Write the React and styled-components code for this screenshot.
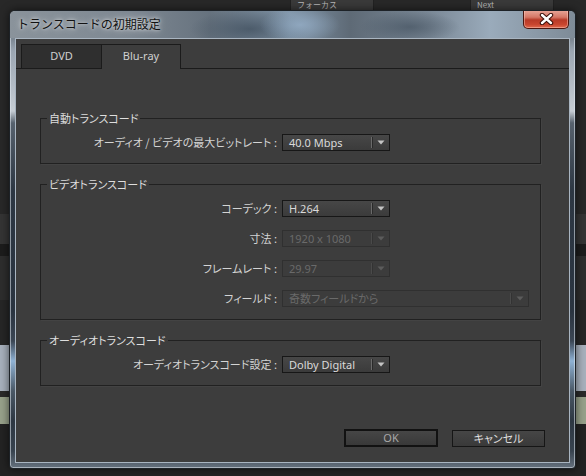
import styled, { createGlobalStyle } from 'styled-components'

const GlobalStyle = createGlobalStyle`
  html, body {
    margin: 0;
    padding: 0;
    background: #252525;
  }
  body {
    width: 586px;
    height: 476px;
    overflow: hidden;
    font-family: "Noto Sans", "Noto Sans CJK JP", sans-serif;
  }
`

const jp = `"Noto Sans CJK JP", "Noto Sans", sans-serif`

const Desktop = styled.div`
  position: relative;
  width: 586px;
  height: 476px;
  overflow: hidden;
  background: linear-gradient(to bottom,
    #282828 0, #282828 214px,
    #343434 214px, #343434 244px,
    #1c1c1c 244px, #1c1c1c 256px,
    #2d2d2d 256px, #2d2d2d 300px,
    #262626 300px, #262626 345px,
    #a7b0bc 345px, #a7b0bc 391px,
    #2a2a2a 391px, #2a2a2a 397px,
    #97a18a 397px, #97a18a 424px,
    #232323 424px);
`

const BackTab = styled.div`
  position: absolute;
  top: 0;
  left: ${p => p.$left}px;
  width: ${p => p.$width}px;
  height: 11px;
  background: #3a3a3a;
  border: 1px solid #222;
  border-top: none;
  box-sizing: border-box;
  padding-left: 6px;
  font: 8px ${jp};
  line-height: 9px;
  color: #b8b8b8;
`

const Window = styled.div`
  position: absolute;
  left: 9px;
  top: 10px;
  width: 567px;
  height: 459px;
  box-sizing: border-box;
  border: 1px solid #1d2227;
  border-radius: 6px 6px 4px 4px;
  box-shadow: inset 0 0 0 1px rgba(225, 233, 240, 0.55), 0 0 8px rgba(0, 0, 0, 0.6);
  background: linear-gradient(to bottom,
    #8f98a2 0, #7c8792 28px, #9ba6b2 40px, #c6cdd4 100px,
    #56616d 112px, #2d3743 180px, #2a3440 300px, #3b4654 330px,
    #8fb2d4 350px, #4a5866 380px, #2d3742 410px, #38434f 440px, #6b7784 459px);
  display: flex;
  flex-direction: column;
  overflow: hidden;
`

const TitleBar = styled.div`
  height: 27px;
  flex: none;
  display: flex;
  align-items: flex-start;
  justify-content: space-between;
  padding: 0 6px 0 7px;
  background:
    radial-gradient(ellipse 40px 18px at 290px 14px, rgba(150, 175, 200, 0.8), transparent),
    radial-gradient(ellipse 60px 20px at 240px 18px, rgba(60, 75, 90, 0.7), transparent),
    radial-gradient(ellipse 50px 16px at 400px 16px, rgba(70, 84, 98, 0.7), transparent),
    linear-gradient(to right, #8a939b 0, #7e8892 120px, #66727e 200px, #7f93a6 280px, #5e6a76 340px, #7a8896 420px, #9aabbb 480px, #7d8a96 567px);
`

const Title = styled.div`
  margin-top: 5px;
  font: 12px ${jp};
  line-height: 16px;
  color: #121212;
  text-shadow: 0 0 6px rgba(255, 255, 255, 0.85), 0 0 3px rgba(255, 255, 255, 0.6);
`

const CloseButton = styled.div`
  margin-top: -1px;
  width: 46px;
  height: 19px;
  box-sizing: border-box;
  border: 1px solid #4a1610;
  border-top: none;
  border-radius: 0 0 5px 5px;
  background: linear-gradient(to bottom, #e9a89b 0, #d57766 40%, #b83a28 55%, #c8452f 80%, #e06a4e 100%);
  box-shadow: inset 0 0 0 1px rgba(255, 210, 200, 0.45);
  display: flex;
  align-items: center;
  justify-content: center;
`

const Client = styled.div`
  flex: 1;
  margin: 0 5px 5px;
  border: 1px solid #a9b5c1;
  background: #3d3d3d;
  display: flex;
  flex-direction: column;
`

const TabStrip = styled.div`
  margin-top: 5px;
  padding-left: 5px;
  height: 24px;
  display: flex;
  align-items: flex-end;
  border-bottom: 1px solid #1b1b1b;
`

const Tab = styled.div`
  width: ${p => p.$width}px;
  height: ${p => (p.$active ? 25 : 24)}px;
  margin-bottom: ${p => (p.$active ? -1 : 0)}px;
  box-sizing: border-box;
  border: 1px solid #1b1b1b;
  border-bottom: none;
  border-left: ${p => (p.$active ? 'none' : '1px solid #1b1b1b')};
  background: ${p => (p.$active ? '#3d3d3d' : '#2f2f2f')};
  color: #d0d0d0;
  font: 11px "Noto Sans", sans-serif;
  line-height: 22px;
  text-align: center;
`

const Panel = styled.div`
  flex: 1;
  display: flex;
  flex-direction: column;
  padding: 42px 28px 15px 24px;
`

const Group = styled.fieldset`
  margin: 0 0 13px;
  padding: 9px 0 12px;
  min-width: 0;
  border: 1px solid #212121;
  box-shadow: 1px 1px 0 rgba(255, 255, 255, 0.03);
`

const Legend = styled.legend`
  margin-left: 6px;
  padding: 0 2px;
  font: 11px ${jp};
  font-feature-settings: "palt";
  line-height: 14px;
  color: #dedede;
`

const Rows = styled.div`
  display: grid;
  grid-template-columns: 236px auto;
  column-gap: 5px;
  row-gap: 13px;
  align-items: center;
  justify-items: start;
`

const Label = styled.div`
  justify-self: end;
  font: 11px ${jp};
  font-feature-settings: "palt";
  line-height: 17px;
  color: #d4d4d4;
  white-space: nowrap;
`

const Select = styled.div`
  width: ${p => p.$width}px;
  height: 17px;
  box-sizing: border-box;
  border: 1px solid ${p => (p.$disabled ? '#303030' : '#171717')};
  background: ${p => (p.$disabled ? '#3c3c3c' : 'linear-gradient(to bottom, #474747, #3b3b3b)')};
  display: flex;
  align-items: center;
`

const Value = styled.div`
  flex: 1;
  padding-left: 6px;
  font: 11px "Noto Sans", ${jp};
  font-feature-settings: "palt";
  line-height: 15px;
  color: ${p => (p.$disabled ? '#6a6a6a' : '#dadada')};
  white-space: nowrap;
  overflow: hidden;
`

const Divider = styled.div`
  width: 1px;
  height: 11px;
  background: ${p => (p.$disabled ? '#4a4a4a' : '#6a6a6a')};
  box-shadow: 1px 0 0 ${p => (p.$disabled ? '#333' : '#2a2a2a')};
`

const Arrow = styled.div`
  width: 17px;
  display: flex;
  justify-content: center;
  align-items: center;
`

const ButtonRow = styled.div`
  margin-top: auto;
  margin-right: -4px;
  display: flex;
  justify-content: flex-end;
  align-items: flex-end;
  gap: 14px;
`

const Button = styled.div`
  width: ${p => (p.$default ? 94 : 93)}px;
  height: ${p => (p.$default ? 18 : 17)}px;
  box-sizing: border-box;
  border: ${p => (p.$default ? '2px solid #121212' : '1px solid #161616')};
  background: linear-gradient(to bottom, #464646, #393939);
  font: 11px "Noto Sans", ${jp};
  font-feature-settings: "palt";
  line-height: ${p => (p.$default ? 14 : 15)}px;
  text-align: center;
  color: ${p => (p.$default ? '#a8a8a8' : '#dedede')};
`

const Dropdown = ({ value, width = 108, disabled }) => (
  <Select $width={width} $disabled={disabled}>
    <Value $disabled={disabled}>{value}</Value>
    <Divider $disabled={disabled} />
    <Arrow>
      <svg width="8" height="5" viewBox="0 0 8 5">
        <path d="M0.5 0.5H7.5L4 4.5Z" fill={disabled ? '#5c5c5c' : '#c4c4c4'} />
      </svg>
    </Arrow>
  </Select>
)

const App = () => (
  <Desktop>
    <GlobalStyle />
    <BackTab $left={290} $width={84}>フォーカス</BackTab>
    <BackTab $left={470} $width={84}>Next</BackTab>
    <Window>
      <TitleBar>
        <Title>トランスコードの初期設定</Title>
        <CloseButton>
          <svg width="15" height="12" viewBox="0 0 15 12">
            <path d="M3 2L12 10M12 2L3 10" stroke="#3a0e08" strokeWidth="4.4" strokeLinecap="round" />
            <path d="M3 2L12 10M12 2L3 10" stroke="#fff" strokeWidth="2.4" strokeLinecap="round" />
          </svg>
        </CloseButton>
      </TitleBar>
      <Client>
        <TabStrip>
          <Tab $width={81}>DVD</Tab>
          <Tab $width={79} $active>Blu-ray</Tab>
        </TabStrip>
        <Panel>
          <Group>
            <Legend>自動トランスコード</Legend>
            <Rows>
              <Label>オーディオ / ビデオの最大ビットレート :</Label>
              <Dropdown value="40.0 Mbps" />
            </Rows>
          </Group>
          <Group>
            <Legend>ビデオトランスコード</Legend>
            <Rows>
              <Label>コーデック :</Label>
              <Dropdown value="H.264" />
              <Label>寸法 :</Label>
              <Dropdown value="1920 x 1080" disabled />
              <Label>フレームレート :</Label>
              <Dropdown value="29.97" disabled />
              <Label>フィールド :</Label>
              <Dropdown value="奇数フィールドから" width={247} disabled />
            </Rows>
          </Group>
          <Group>
            <Legend>オーディオトランスコード</Legend>
            <Rows>
              <Label>オーディオトランスコード設定 :</Label>
              <Dropdown value="Dolby Digital" />
            </Rows>
          </Group>
          <ButtonRow>
            <Button $default>OK</Button>
            <Button>キャンセル</Button>
          </ButtonRow>
        </Panel>
      </Client>
    </Window>
  </Desktop>
)

export default App
